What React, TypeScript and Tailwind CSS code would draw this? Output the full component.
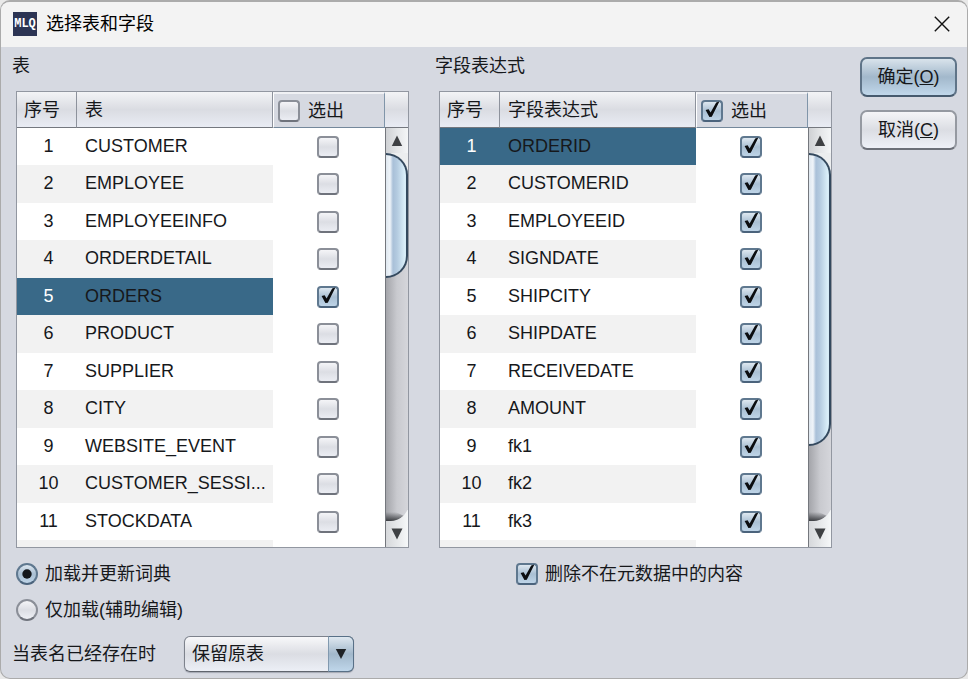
import React from "react";

type Row = { name: string; checked: boolean };

const tables: Row[] = [
  { name: "CUSTOMER", checked: false },
  { name: "EMPLOYEE", checked: false },
  { name: "EMPLOYEEINFO", checked: false },
  { name: "ORDERDETAIL", checked: false },
  { name: "ORDERS", checked: true },
  { name: "PRODUCT", checked: false },
  { name: "SUPPLIER", checked: false },
  { name: "CITY", checked: false },
  { name: "WEBSITE_EVENT", checked: false },
  { name: "CUSTOMER_SESSI...", checked: false },
  { name: "STOCKDATA", checked: false },
];

const fields: Row[] = [
  "ORDERID",
  "CUSTOMERID",
  "EMPLOYEEID",
  "SIGNDATE",
  "SHIPCITY",
  "SHIPDATE",
  "RECEIVEDATE",
  "AMOUNT",
  "fk1",
  "fk2",
  "fk3",
].map((name) => ({ name, checked: true }));

const CheckBox: React.FC<{ id?: string; label?: string; checked: boolean }> = ({ id, label, checked }) => (
  <span className="relative inline-block size-[22px] shrink-0 align-middle">
    <input
      id={id}
      type="checkbox"
      aria-label={label}
      defaultChecked={checked}
      className="peer block size-[22px] appearance-none rounded-[4px] border-2 border-[#8b8f98] border-b-[#6f737c] bg-linear-to-b from-[#fafafc] via-[#dcdee4] to-[#eef0f6] bg-origin-border checked:border-[#5f788f] checked:border-b-[#4b637c] checked:from-[#eaf1f7] checked:via-[#a9bfd3] checked:to-[#c3d9ec]"
    />
    <svg viewBox="0 0 22 22" className="pointer-events-none absolute inset-0 hidden size-[22px] peer-checked:block">
      <path d="M4.6 10 L7.6 9.2 L9.6 12.4 L15.2 2.4 L18.4 1.6 L10.8 16.8 L8.4 17 Z" fill="#0b0d10" />
    </svg>
  </span>
);

const Radio: React.FC<{ id: string; checked?: boolean }> = ({ id, checked }) => (
  <span className="relative inline-block size-[22px] shrink-0">
    <input
      id={id}
      type="radio"
      name="loadMode"
      defaultChecked={checked}
      className="peer block size-[22px] appearance-none rounded-full border-2 border-[#8b8f98] border-b-[#6f737c] bg-linear-to-b from-[#fafafc] via-[#dcdee4] to-[#f2f4f9] bg-origin-border checked:border-[#5f788f] checked:border-b-[#4b637c] checked:from-[#eaf1f7] checked:via-[#a9bfd3] checked:to-[#c3d9ec]"
    />
    <svg viewBox="0 0 22 22" className="pointer-events-none absolute inset-0 hidden size-[22px] peer-checked:block">
      <circle cx="11" cy="11" r="4.7" fill="#14171b" />
    </svg>
  </span>
);

const ScrollBar: React.FC<{ size: number }> = ({ size }) => (
  <div className="flex min-h-0 flex-1 flex-col border-l border-[#74777d] bg-linear-to-r from-[#a4a5aa] via-[#c9cacf] to-[#d5d6db]">
    <button aria-label="上" className="flex h-[25px] shrink-0 items-center justify-center bg-linear-to-r from-[#cfd1d4] via-[#e4e6e8] to-[#f4f6f7]">
      <svg viewBox="0 0 12 12" className="size-3">
        <path d="M6 0.5 L11.2 11 H0.8 Z" fill="#3e4043" />
      </svg>
    </button>
    <div className="min-h-0 flex-1">
      <div className="bg-[linear-gradient(#eceeef_24px,transparent_24px)]" style={{ height: `${size}%` }}>
        <div className="h-full rounded-r-[22px] border-y-2 border-r-2 border-[#34495e] bg-[linear-gradient(90deg,#dfe8f0_0,#eff4f9_4px,#a9c0d8_7px,#b4cbe0_11px,#dbf0fa_19px,#cfe6f3_100%)]" />
      </div>
    </div>
    <button aria-label="下" className="block h-[37px] shrink-0">
      <svg viewBox="0 0 22 37" preserveAspectRatio="none" className="h-[37px] w-full">
        <defs>
          <linearGradient id="trackEnd" x1="0" y1="0" x2="0" y2="1">
            <stop offset="0" stopColor="#303236" stopOpacity="0" />
            <stop offset="1" stopColor="#303236" stopOpacity="0.9" />
          </linearGradient>
          <linearGradient id="downFace" x1="0" y1="0" x2="1" y2="0">
            <stop offset="0" stopColor="#d6d8db" />
            <stop offset="1" stopColor="#f6f8f9" />
          </linearGradient>
        </defs>
        <path d="M0 2 H10 L18 6 L10 11 H0 Z" fill="url(#trackEnd)" />
        <path d="M0 11 H5 C13 10.500 18 7 22 -1 V37 H0 Z" fill="url(#downFace)" />
        <path d="M5.500 18.500 H16.500 L11 29.500 Z" fill="#3e4043" />
      </svg>
    </button>
  </div>
);

type PickListProps = { id: string; title: string; rows: Row[]; selected: number; allChecked: boolean; thumb: number };

const headFill = "bg-linear-to-b from-[#f3f4f6] via-[#dadce2] to-[#e9ecf4]";

const PickList: React.FC<PickListProps> = ({ id, title, rows, selected, allChecked, thumb }) => (
  <section className="flex min-h-0 flex-col">
    <h2 className="mb-[13px] leading-6">{title}</h2>
    <div className="ml-1 flex min-h-0 flex-1 overflow-hidden border border-[#9297a1] bg-white">
      <div className="min-h-0 min-w-0 flex-1 overflow-hidden">
        <table className="w-full table-fixed border-separate border-spacing-0">
          <thead>
            <tr className="h-9">
              <th className={`w-[60px] border-r border-b border-[#8d929c] border-b-[#74787f] pl-[7px] text-left font-normal ${headFill}`}>序号</th>
              <th className={`border-r border-b border-[#8d929c] border-b-[#74787f] pl-2 text-left font-normal ${headFill}`}>{title}</th>
              <th className="w-28 border-t-2 border-r border-b border-l border-t-[#f0f1f4] border-r-[#8095a9] border-b-[#74889b] border-l-white bg-[#d6d9e1] p-0 pl-1 text-left font-normal">
                <div className="flex items-center gap-2">
                  <CheckBox id={id} checked={allChecked} />
                  <label htmlFor={id}>选出</label>
                </div>
              </th>
            </tr>
          </thead>
          <tbody>
            {rows.map((row, index) => (
              <tr key={row.name} className="group odd:h-[37px] even:h-[38px]">
                <td className={index === selected ? "bg-[#396988] p-0 pb-0.5 pl-[3px] text-center text-white" : "p-0 pb-0.5 pl-[3px] text-center group-even:bg-[#f2f2f2]"}>
                  {index + 1}
                </td>
                <td className={index === selected ? "truncate bg-[#396988] p-0 pb-0.5 pl-2" : "truncate p-0 pb-0.5 pl-2 group-even:bg-[#f2f2f2]"}>
                  {row.name}
                </td>
                <td className="p-0 pr-0.5 text-center leading-none">
                  <CheckBox label={row.name} checked={row.checked} />
                </td>
              </tr>
            ))}
            <tr className="h-[38px]">
              <td className="bg-[#f2f2f2]" colSpan={2} />
              <td />
            </tr>
          </tbody>
        </table>
      </div>
      <div className="flex w-[23px] shrink-0 flex-col">
        <div className={`h-9 shrink-0 border-b border-[#74787f] ${headFill}`} />
        <ScrollBar size={thumb} />
      </div>
    </div>
  </section>
);

const App: React.FC = () => {
  return (
    <div className="h-screen bg-[#e9e9e9] font-['Liberation_Sans','Noto_Sans_CJK_SC',sans-serif] text-lg leading-6 text-[#16181b]">
      <div className="flex h-full flex-col overflow-hidden rounded-[10px] border border-t-2 border-[#ababab] bg-[#d6d9e1]">
        <header className="flex h-[45px] shrink-0 items-center justify-between bg-[#f3f3f3] pr-[17px] pb-0.5 pl-3 text-black">
          <div className="flex items-center gap-[9px]">
            <span className="flex size-6 items-center justify-center overflow-hidden bg-[#2c3454] font-['Liberation_Mono',monospace] text-xs font-bold text-white">
              MLQ
            </span>
            <h1>选择表和字段</h1>
          </div>
          <button aria-label="关闭">
            <svg viewBox="0 0 16 16" className="size-4">
              <path d="M0.800 0.800 L15.200 15.200 M15.200 0.800 L0.800 15.200" stroke="#111" strokeWidth="1.400" fill="none" />
            </svg>
          </button>
        </header>

        <main className="flex min-h-0 flex-1 gap-7 pt-[7px] pr-[10px] pl-[11px]">
          <div className="flex min-w-0 flex-1 flex-col pb-1.5">
            <div className="grid min-h-0 flex-1 grid-cols-2 grid-rows-[minmax(0,1fr)] gap-x-[26px]">
              <PickList id="allTables" title="表" rows={tables} selected={4} allChecked={false} thumb={35} />
              <PickList id="allFields" title="字段表达式" rows={fields} selected={0} allChecked={true} thumb={82} />
            </div>

            <div className="mt-2 grid grid-cols-2 gap-x-[26px]">
              <div className="pl-1">
                <div className="flex h-9 items-center gap-[7px]">
                  <Radio id="loadUpdate" checked />
                  <label htmlFor="loadUpdate">加载并更新词典</label>
                </div>
                <div className="flex h-9 items-center gap-[7px]">
                  <Radio id="loadOnly" />
                  <label htmlFor="loadOnly">仅加载(辅助编辑)</label>
                </div>
              </div>
              <div className="flex h-9 items-center gap-[7px] pl-[81px]">
                <CheckBox id="removeMissing" checked />
                <label htmlFor="removeMissing">删除不在元数据中的内容</label>
              </div>
            </div>

            <div className="mt-2 flex items-center gap-7">
              <label htmlFor="existing">当表名已经存在时</label>
              <div className="relative">
                <select
                  id="existing"
                  className="block h-9 w-[170px] appearance-none rounded-md border border-[#7d828c] border-b-[#5f646d] bg-linear-to-b from-[#f8f8fa] via-[#dbdde3] to-[#eceff6] pl-[7px] shadow-[0_1px_1px_rgba(90,95,110,0.4)]"
                >
                  <option>保留原表</option>
                </select>
                <span className="pointer-events-none absolute inset-y-0 right-0 flex w-[26px] items-center justify-center rounded-r-md border border-[#587087] border-l-[#8199af] bg-linear-to-b from-[#dfe8f0] via-[#a2b8cb] to-[#bfd6ea]">
                  <svg viewBox="0 0 12 12" className="size-3">
                    <path d="M0.800 1 H11.200 L6 11 Z" fill="#1e2226" />
                  </svg>
                </span>
              </div>
            </div>
          </div>

          <div className="flex w-[97px] shrink-0 flex-col gap-[13px] pt-[3px]">
            <button className="h-10 rounded-[7px] border-2 border-[#5f7488] border-b-[#465a6e] bg-linear-to-b from-[#dfe8ef] via-[#a2b8cb] to-[#c4dbee] bg-origin-border">
              确定(<u>O</u>)
            </button>
            <button className="h-10 rounded-[7px] border-2 border-[#9599a1] border-b-[#6b6f78] bg-linear-to-b from-[#f8f8fa] via-[#dbdde3] to-[#f0f3fa] bg-origin-border">
              取消(<u>C</u>)
            </button>
          </div>
        </main>
      </div>
    </div>
  );
};

export default App;
